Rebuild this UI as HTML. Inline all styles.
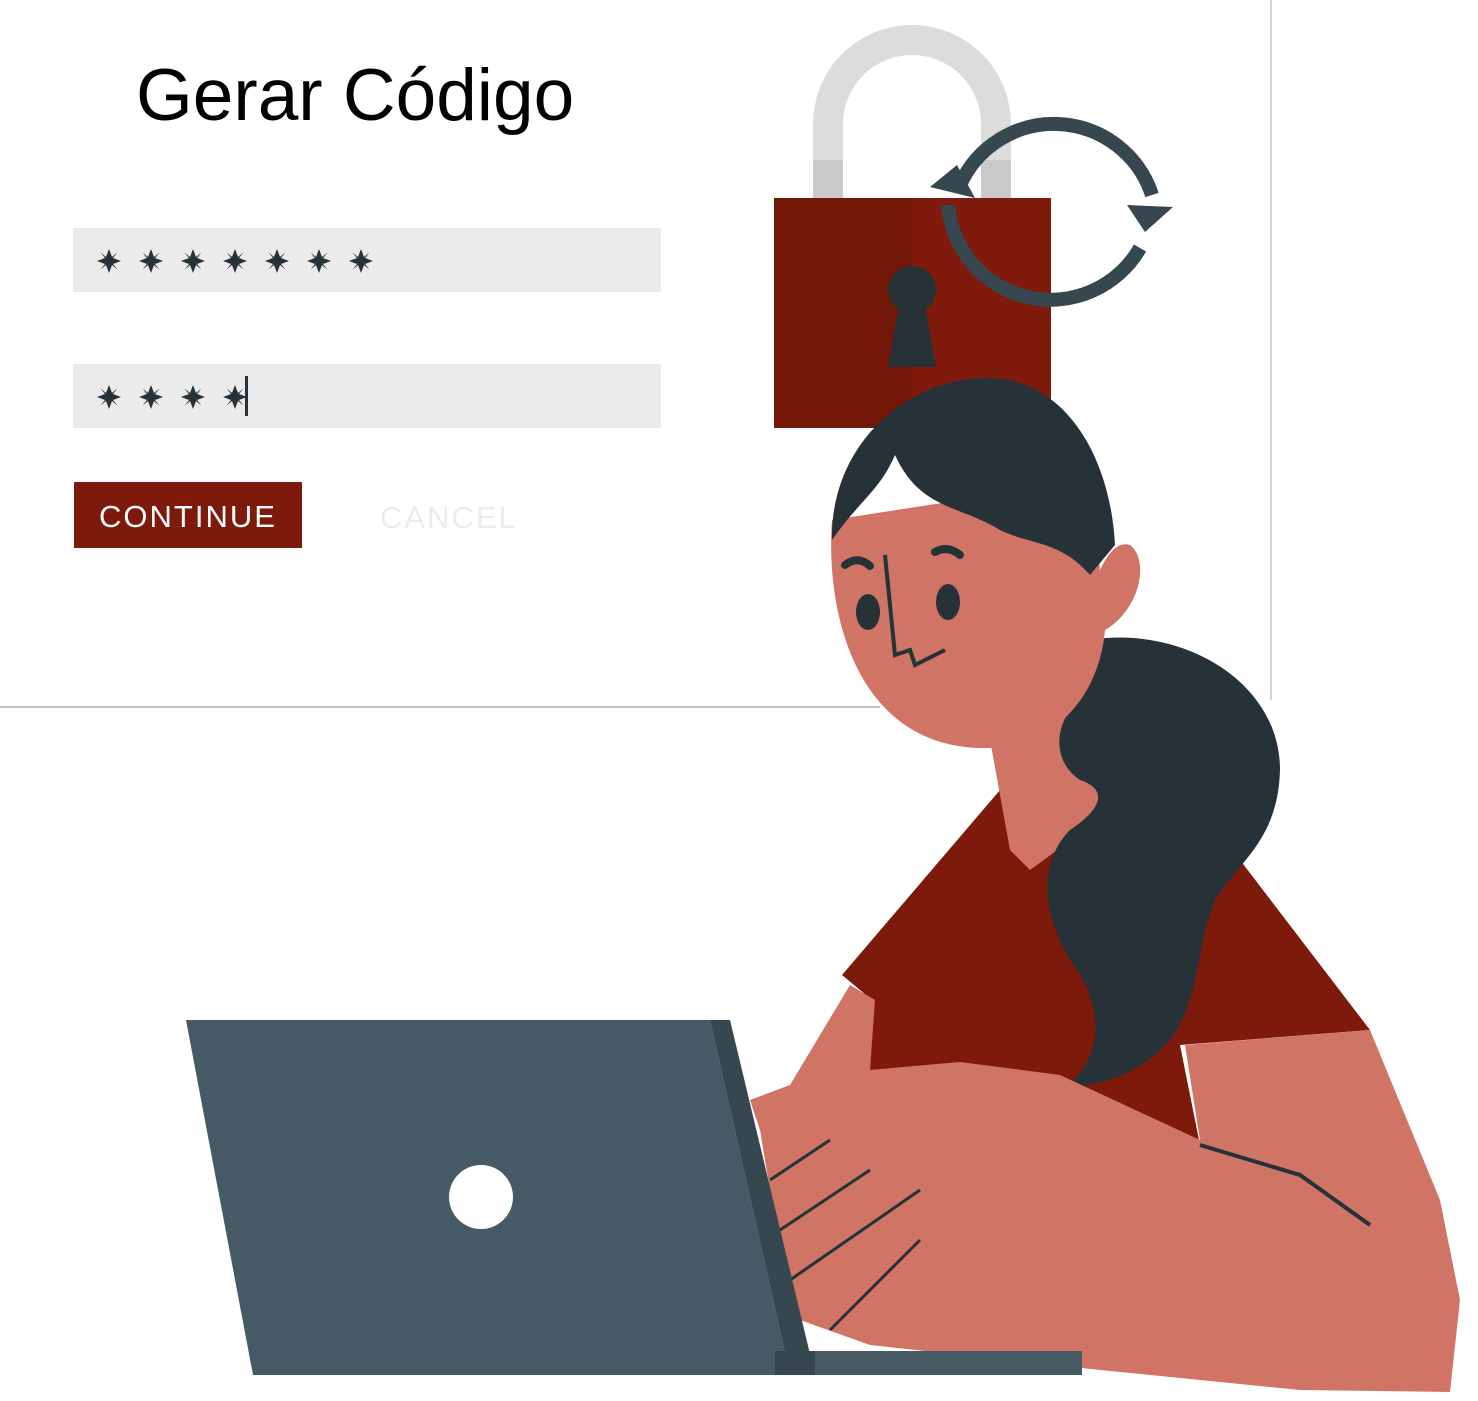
<!DOCTYPE html>
<html><head><meta charset="utf-8"><style>
html,body{margin:0;padding:0;background:#fff;}
body{width:1478px;height:1401px;position:relative;overflow:hidden;font-family:"Liberation Sans",sans-serif;}
.t{position:absolute;left:136px;top:54px;font-size:73px;color:#000;letter-spacing:0px}
.in{position:absolute;left:73px;width:588px;height:64px;background:#ebebeb}
.btn{position:absolute;left:74px;top:482px;width:228px;height:66px;background:#7d1a0c;color:#fff;font-size:31px;line-height:70px;text-align:center;letter-spacing:2px}
.cn{position:absolute;left:380px;top:500px;font-size:31px;color:#ececec;letter-spacing:2px}
</style></head><body>
<div class="t">Gerar Código</div>
<div class="in" style="top:228px"></div>
<div class="in" style="top:364px"></div>
<div class="btn">CONTINUE</div>
<div class="cn">CANCEL</div>
<svg width="1478" height="1401" style="position:absolute;left:0;top:0">
<defs>
<path id="s" d="M0 -12 L3 -4 L8.5 -8.5 L4 -3 L12 0 L4 3 L8.5 8.5 L3 4 L0 12 L-3 4 L-8.5 8.5 L-4 3 L-12 0 L-4 -3 L-8.5 -8.5 L-3 -4 Z" fill="#263238"/>
</defs>
<use href="#s" x="109" y="261"/><use href="#s" x="151" y="261"/><use href="#s" x="193" y="261"/><use href="#s" x="235" y="261"/><use href="#s" x="277" y="261"/><use href="#s" x="319" y="261"/><use href="#s" x="361" y="261"/>
<use href="#s" x="109" y="397"/><use href="#s" x="151" y="397"/><use href="#s" x="193" y="397"/><use href="#s" x="235" y="397"/>
<rect x="245" y="376" width="3" height="40" fill="#263238"/>
<line x1="0" y1="707" x2="880" y2="707" stroke="#888" stroke-width="1"/>
<line x1="1271" y1="0" x2="1271" y2="700" stroke="#aaa" stroke-width="1"/>
<!-- shackle -->
<path d="M828 198 V124 A84 84 0 0 1 996 124 V198" fill="none" stroke="#dcdcdc" stroke-width="30"/>
<rect x="813" y="160" width="30" height="38" fill="#c9c9c9"/><rect x="981" y="160" width="30" height="38" fill="#c9c9c9"/>
<rect x="774" y="198" width="277" height="230" fill="#801a0d"/>
<rect x="774" y="198" width="138" height="230" fill="#731709"/>
<circle cx="912" cy="290" r="24" fill="#263238"/>
<path d="M900 300 L924 300 L936 367 L888 367 Z" fill="#263238"/>
<!-- refresh arrows -->
<path d="M960 185 A103 103 0 0 1 1152 195" fill="none" stroke="#37474f" stroke-width="14"/>
<path d="M1140 248 A103 103 0 0 1 948 205" fill="none" stroke="#37474f" stroke-width="14"/>
<path d="M1127 205 L1173 207 L1145 232 Z" fill="#37474f"/>
<path d="M930 187 L957 165 L975 198 Z" fill="#37474f"/>
<!-- shirt -->
<path d="M1000 790 L842 975 L872 1000 L870 1070 L880 1140 L1200 1145 L1180 1045 L1370 1030 L1240 860 L1110 800 Z" fill="#7d1a0c"/>
<!-- neck -->
<path d="M990 740 L1010 850 L1030 870 L1105 815 L1095 700 Z" fill="#d07566"/>
<!-- ponytail -->
<path d="M1090 640 C1180 625 1280 680 1280 770 C1278 840 1240 860 1215 900 C1195 950 1200 1000 1170 1040 C1140 1075 1100 1085 1065 1088 C1110 1050 1100 1000 1070 960 C1040 910 1040 860 1070 830 C1100 810 1110 790 1080 780 C1050 760 1055 720 1080 700 Z" fill="#263238"/>
<!-- right arm / hands -->
<path d="M1185 1045 L1370 1030 L1440 1200 L1460 1300 L1450 1392 L1300 1390 L1100 1370 L870 1345 L800 1320 L780 1250 L760 1130 L750 1100 L790 1085 L850 985 L875 1000 L870 1070 L960 1062 L1060 1075 L1200 1140 Z" fill="#d07566"/>
<path d="M1200 1145 L1300 1175 L1370 1225" fill="none" stroke="#263238" stroke-width="4"/>
<path d="M770 1180 L830 1140 M780 1230 L870 1170 M790 1280 L920 1190 M830 1330 L920 1240" stroke="#263238" stroke-width="3" fill="none"/>
<!-- head -->
<path d="M832 520 C825 620 860 745 980 748 C1060 750 1100 690 1105 630 C1140 610 1150 560 1130 545 C1115 540 1105 560 1100 570 L1090 480 Z" fill="#d07566"/>
<path d="M832 540 C830 450 900 380 985 378 C1060 376 1110 450 1115 545 L1090 575 C1060 540 1030 545 1000 530 C960 505 920 510 895 455 C880 490 860 500 832 540 Z" fill="#263238"/>
<path d="M885 555 L895 655 L910 650 L915 665 L945 650" fill="none" stroke="#263238" stroke-width="4"/>
<ellipse cx="868" cy="612" rx="12" ry="18" fill="#263238"/>
<ellipse cx="948" cy="602" rx="12" ry="18" fill="#263238"/>
<path d="M845 565 Q858 555 870 566 M935 552 Q948 545 960 555" stroke="#263238" stroke-width="8" fill="none" stroke-linecap="round"/>
<!-- laptop -->
<path d="M186 1020 L710 1020 L790 1375 L253 1375 Z" fill="#455a64"/>
<path d="M710 1020 L730 1020 L815 1375 L790 1375 Z" fill="#37474f"/>
<rect x="775" y="1351" width="307" height="24" fill="#455a64"/>
<rect x="775" y="1351" width="40" height="24" fill="#37474f"/>
<circle cx="481" cy="1197" r="32" fill="#fff"/>
</svg>
</body></html>
